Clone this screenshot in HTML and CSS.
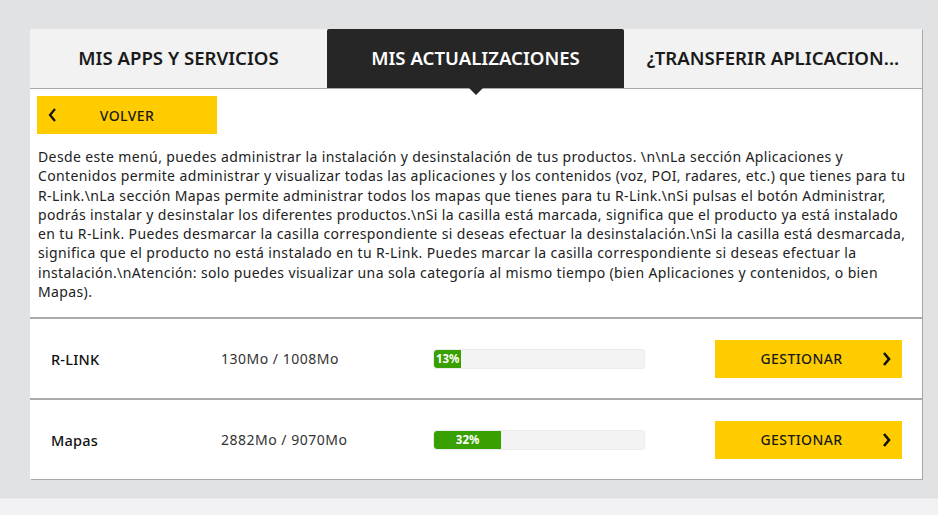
FILE: index.html
```html
<!DOCTYPE html>
<html lang="es">
<head>
<meta charset="utf-8">
<title>Mis actualizaciones</title>
<link rel="stylesheet" href="styles.css">
</head>
<body>
<div class="page">
  <div class="card">
    <nav class="tabs">
      <div class="tab">MIS APPS Y SERVICIOS</div>
      <div class="tab active">MIS ACTUALIZACIONES</div>
      <div class="tab">¿TRANSFERIR APLICACION...</div>
    </nav>
    <div class="intro">
      <button class="btn back">
        <svg class="chev" width="10" height="16" viewBox="0 0 10 16"><path d="M8 2 L3 8 L8 14" fill="none" stroke="#111" stroke-width="2.2"/></svg>
        <span>VOLVER</span>
      </button>
      <p class="desc">Desde este menú, puedes administrar la instalación y desinstalación de tus productos. \n\nLa sección Aplicaciones y Contenidos permite administrar y visualizar todas las aplicaciones y los contenidos (voz, POI, radares, etc.) que tienes para tu R-Link.\nLa sección Mapas permite administrar todos los mapas que tienes para tu R-Link.\nSi pulsas el botón Administrar, podrás instalar y desinstalar los diferentes productos.\nSi la casilla está marcada, significa que el producto ya está instalado en tu R-Link. Puedes desmarcar la casilla correspondiente si deseas efectuar la desinstalación.\nSi la casilla está desmarcada, significa que el producto no está instalado en tu R-Link. Puedes marcar la casilla correspondiente si deseas efectuar la instalación.\nAtención: solo puedes visualizar una sola categoría al mismo tiempo (bien Aplicaciones y contenidos, o bien Mapas).</p>
    </div>
    <div class="row">
      <div class="name">R-LINK</div>
      <div class="size">130Mo / 1008Mo</div>
      <div class="bar"><div class="fill" style="width:13%">13%</div></div>
      <button class="btn manage">
        <span>GESTIONAR</span>
        <svg class="chev" width="10" height="16" viewBox="0 0 10 16"><path d="M2 2 L7 8 L2 14" fill="none" stroke="#111" stroke-width="2.6"/></svg>
      </button>
    </div>
    <div class="row">
      <div class="name">Mapas</div>
      <div class="size">2882Mo / 9070Mo</div>
      <div class="bar"><div class="fill" style="width:32%">32%</div></div>
      <button class="btn manage">
        <span>GESTIONAR</span>
        <svg class="chev" width="10" height="16" viewBox="0 0 10 16"><path d="M2 2 L7 8 L2 14" fill="none" stroke="#111" stroke-width="2.6"/></svg>
      </button>
    </div>
  </div>
</div>
<div class="footer"></div>
</body>
</html>
```

FILE: styles.css
```css
* { box-sizing: border-box; }
html, body { margin: 0; padding: 0; }
body {
  background: #e1e2e4;
  font-family: "Noto Sans", "Open Sans", sans-serif;
  color: #1e1e1e;
  width: 938px;
  height: 515px;
  overflow: hidden;
}
.page {
  padding: 29px 0 0 30px;
  height: 498px;
}
.card {
  width: 892px;
  background: #fff;
  box-shadow: 1px 1px 0 #a8a8a8;
}
.tabs {
  display: grid;
  grid-template-columns: 297px 297px 298px;
  height: 60px;
  background: #f2f2f2;
  border-bottom: 1px solid #a9a9a9;
}
.tab {
  font-size: 18.6px;
  font-weight: 600;
  color: #1a1a1a;
  white-space: nowrap;
  line-height: 57px;
  text-align: center;
}
.tab.active {
  position: relative;
  background: #262626;
  color: #fff;
  border-radius: 2px 2px 0 0;
  height: 59px;
}
.tab.active::after {
  content: "";
  position: absolute;
  left: 50%;
  top: 58px;
  margin-left: -8px;
  border-left: 8px solid transparent;
  border-right: 8px solid transparent;
  border-top: 8px solid #262626;
}
.intro {
  padding: 7px 8px 16px 7px;
}
.btn {
  border: 0;
  background: #ffcc00;
  font-family: inherit;
  font-size: 14px;
  font-weight: 500;
  letter-spacing: 0.4px;
  color: #1a1a1a;
  height: 38px;
  display: flex;
  align-items: center;
  padding: 0;
  cursor: pointer;
}
.back {
  width: 180px;
  position: relative;
  justify-content: center;
}
.back .chev {
  position: absolute;
  left: 10px;
  top: 11px;
}
.desc {
  margin: 13px 0 0 1px;
  font-size: 14px;
  letter-spacing: 0.38px;
  line-height: 19.25px;
  color: #222;
}
.row {
  display: flex;
  align-items: center;
  height: 81px;
  border-top: 2px solid #aaa;
  padding: 0 20px 0 21px;
}
.name {
  width: 170px;
  font-size: 14.5px;
  font-weight: 500;
  letter-spacing: 0.2px;
  color: #111;
}
.size {
  width: 212px;
  font-size: 14px;
  letter-spacing: 0.5px;
  color: #333;
}
.bar {
  width: 212px;
  height: 20px;
  background: #f3f3f3;
  border: 1px solid #ececec;
  border-radius: 3px;
  overflow: hidden;
}
.fill {
  height: 100%;
  background: #38a000;
  color: #fff;
  font-size: 11.5px;
  font-weight: 700;
  line-height: 18px;
  text-align: center;
  border-radius: 3px 0 0 3px;
}
.manage {
  margin-left: auto;
  width: 187px;
  position: relative;
  justify-content: center;
  padding-right: 14px;
}
.manage .chev {
  position: absolute;
  right: 10px;
  top: 11px;
}
.footer {
  height: 17px;
  background: #f2f2f4;
  border-top: 1px solid #ebebee;
}
```
